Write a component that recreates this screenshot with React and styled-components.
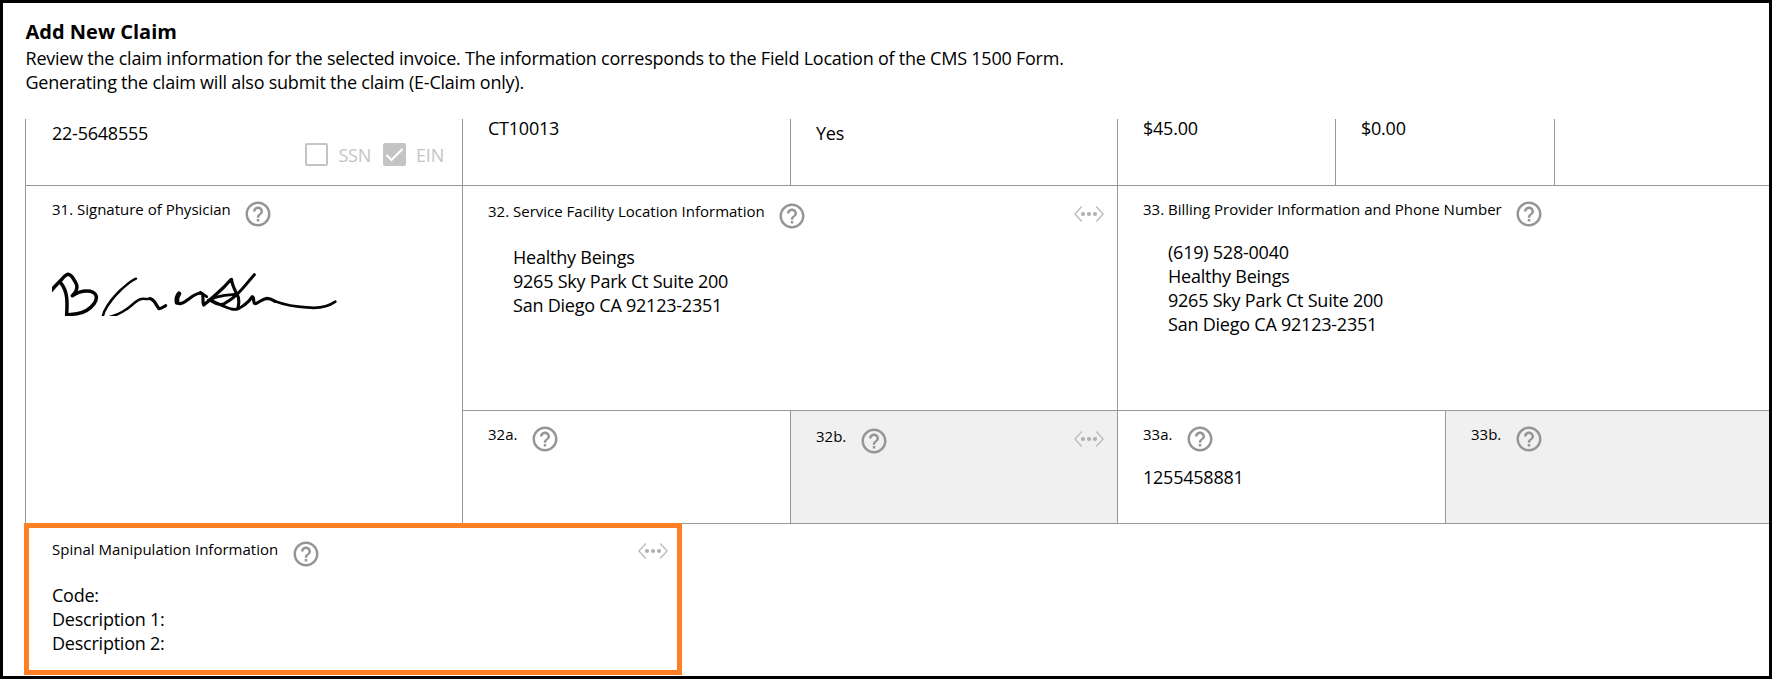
import React from "react";
import styled, { createGlobalStyle } from "styled-components";

const LINE = "#979797";

const GlobalStyle = createGlobalStyle`
  * { box-sizing: border-box; }
  body {
    margin: 0;
    background: #fff;
    color: #000;
    font-family: "Open Sans", "Noto Sans", sans-serif;
    font-size: 18px;
    line-height: 24px;
    letter-spacing: -0.23px;
  }
`;

const Frame = styled.main`
  width: 1772px;
  height: 679px;
  border: 3px solid #000;
  overflow: hidden;
  background: #fff;
`;

const Header = styled.header`
  height: 116px;
  padding: 16px 0 0 22.5px;
`;

const Title = styled.h1`
  margin: 0;
  font-size: 20px;
  line-height: 25px;
  font-weight: 700;
  letter-spacing: 0;
`;

const Intro = styled.p`
  margin: 2px 0 0;
  white-space: pre;
`;

const Form = styled.section`
  margin-left: 22px;
  display: flex;
  flex-direction: column;
`;

const Row = styled.div`
  display: grid;
  grid-template-columns: ${(p) => p.$cols};
  height: ${(p) => p.$h}px;
`;

const Cell = styled.div`
  border-left: 1px solid ${LINE};
  border-bottom: 1px solid ${LINE};
  background: ${(p) => (p.$muted ? "#f0f0f0" : "transparent")};
  padding: ${(p) => p.$top ?? 0}px 13px 0 ${(p) => p.$left ?? 25}px;
  min-width: 0;
`;

const Stack = styled.div`
  display: grid;
  grid-template-rows: 225px 113px;
`;

const Split = styled.div`
  display: grid;
  grid-template-columns: ${(p) => p.$cols};
`;

const Heading = styled.div`
  display: flex;
  align-items: flex-start;
  height: 29px;
`;

const Label = styled.span`
  margin-top: -1px;
  font-size: 15px;
  line-height: 20px;
  letter-spacing: 0;
  white-space: nowrap;
`;

const HelpSvg = styled.svg`
  flex: none;
  width: 30px;
  height: 30px;
  margin: -1px 0 0 12.4px;
`;

const MoreSvg = styled.svg`
  flex: none;
  width: 30px;
  height: 16px;
  margin: ${(p) => p.$top ?? 4}px 0 0 auto;
`;

const Lines = styled.div`
  margin: ${(p) => p.$gap ?? 0}px 0 0 ${(p) => p.$indent ?? 0}px;
  white-space: nowrap;
`;

const Checks = styled.div`
  display: flex;
  align-items: center;
  justify-content: flex-end;
  height: 23px;
  margin-top: -2px;
  padding-right: 5px;
  color: #c4c4c4;
`;

const CheckBox = styled.span`
  width: 23px;
  height: 23px;
  border: 2px solid #c4c4c4;
  border-radius: 2px;
  background: ${(p) => (p.$on ? "#c4c4c4" : "#fff")};
  display: flex;
  align-items: center;
  justify-content: center;
`;

const CheckText = styled.span`
  margin: 0 12px 0 10px;
  &:last-child { margin-right: 0; }
`;

const SignatureSvg = styled.svg`
  display: block;
  width: 286px;
  height: 44px;
  margin-top: 43px;
`;

const Highlight = styled.div`
  width: 658px;
  height: 152px;
  margin: -1px 0 0 -1px;
  border: 5px solid #ff7f27;
  padding: 12px 9px 0 23px;
`;

function Help() {
  return (
    <HelpSvg viewBox="0 0 24 24" fill="#959595">
      <path d="M11 18h2v-2h-2v2zm1-16C6.48 2 2 6.48 2 12s4.48 10 10 10 10-4.48 10-10S17.52 2 12 2zm0 18c-4.41 0-8-3.59-8-8s3.59-8 8-8 8 3.59 8 8-3.59 8-8 8zm0-14c-2.21 0-4 1.79-4 4h2c0-1.1.9-2 2-2s2 .9 2 2c0 2-3 1.75-3 5h2c0-2.25 3-2.5 3-5 0-2.21-1.79-4-4-4z" />
    </HelpSvg>
  );
}

function More({ top }) {
  return (
    <MoreSvg viewBox="0 0 30 16" $top={top}>
      <path d="M7.8 .6 .9 8l6.9 7.4M22.2 .6 29.1 8l-6.9 7.4" fill="none" stroke="#bcbcbc" strokeWidth="1.4" />
      <circle cx="9" cy="8" r="2.1" fill="#b0b0b0" />
      <circle cx="15" cy="8" r="2.1" fill="#b0b0b0" />
      <circle cx="21" cy="8" r="2.1" fill="#b0b0b0" />
    </MoreSvg>
  );
}

function FieldHeading({ children, more, moreTop }) {
  return (
    <Heading>
      <Label>{children}</Label>
      <Help />
      {more && <More top={moreTop} />}
    </Heading>
  );
}

function Signature() {
  return (
    <SignatureSvg viewBox="66 66 858 132">
      <g fill="none" stroke="#050505" strokeLinecap="round" strokeLinejoin="round">
        <path strokeWidth="10.5" d="M62 124C75 108 86 97 97 86C105 77 110 73 115 73C125 74 131 87 137 98C145 111 140 124 127 137C144 126 162 120 182 124C203 130 202 146 193 160C181 176 163 188 141 191L110 195" />
        <path strokeWidth="10.5" d="M91 97C103 111 108 126 110 143C112 162 111 177 110 193" />
        <path strokeWidth="7.5" d="M318 86C302 92 288 106 272 120C249 142 232 166 223 184L218 200" />
        <path strokeWidth="7.5" d="M235 202C257 197 271 191 289 178C309 165 318 150 334 147C345 145 352 149 360 146" />
        <path strokeWidth="9.5" d="M360 146C374 149 377 164 387 176C394 177 401 170 407 167" />
        <path strokeWidth="14" d="M447 131C440 139 440 150 441 157" />
        <path strokeWidth="9.5" d="M441 158C450 166 463 157 472 150C487 139 500 128 514 130C524 134 515 151 521 165C539 151 562 130 582 111C596 98 606 81 605 91C607 108 617 124 625 142C629 158 625 170 624 174" />
        <path strokeWidth="8.5" d="M511 127L530 140M535 151C548 144 561 140 584 136L614 133M544 151C563 161 581 171 604 177C621 181 631 174 644 164" />
        <path strokeWidth="9" d="M673 74C656 93 643 112 624 130C608 146 598 153 583 161C571 166 557 162 545 154" />
        <path strokeWidth="9.5" d="M644 164C652 158 660 151 667 140C675 142 667 160 676 161C688 157 698 146 711 145C722 145 727 149 735 154" />
        <path strokeWidth="8" d="M735 154C767 166 796 171 830 172C862 176 893 171 916 155" />
      </g>
    </SignatureSvg>
  );
}

export default function App() {
  return (
    <>
      <GlobalStyle />
      <Frame>
        <Header>
          <Title>Add New Claim</Title>
          <Intro>
            {"Review the claim information for the selected invoice. The information corresponds to the Field Location of the CMS 1500 Form.\nGenerating the claim will also submit the claim (E-Claim only)."}
          </Intro>
        </Header>
        <Form>
          <Row $cols="437px 328px 327px 218px 219px 1fr" $h={67}>
            <Cell $top={2} $left={26}>
              22-5648555
              <Checks>
                <CheckBox />
                <CheckText>SSN</CheckText>
                <CheckBox $on>
                  <svg width="19" height="19" viewBox="0 0 19 19">
                    <path d="M1.5 10 6.5 15 17.5 4" fill="none" stroke="#fff" strokeWidth="2.2" />
                  </svg>
                </CheckBox>
                <CheckText>EIN</CheckText>
              </Checks>
            </Cell>
            <Cell><Lines $gap={-3}>CT10013</Lines></Cell>
            <Cell $top={2}>Yes</Cell>
            <Cell><Lines $gap={-3}>$45.00</Lines></Cell>
            <Cell><Lines $gap={-3}>$0.00</Lines></Cell>
            <Cell />
          </Row>
          <Row $cols="437px 655px 1fr" $h={338}>
            <Cell $top={14} $left={26}>
              <FieldHeading>31. Signature of Physician</FieldHeading>
              <Signature />
            </Cell>
            <Stack>
              <Cell $top={16}>
                <FieldHeading more>32. Service Facility Location Information</FieldHeading>
                <Lines $gap={14} $indent={25}>
                  Healthy Beings<br />9265 Sky Park Ct Suite 200<br />San Diego CA 92123-2351
                </Lines>
              </Cell>
              <Split $cols="328px 1fr">
                <Cell $top={14}><FieldHeading>32a.</FieldHeading></Cell>
                <Cell $top={16} $muted><FieldHeading more>32b.</FieldHeading></Cell>
              </Split>
            </Stack>
            <Stack>
              <Cell $top={14}>
                <FieldHeading>33. Billing Provider Information and Phone Number</FieldHeading>
                <Lines $gap={11} $indent={25}>
                  (619) 528-0040<br />Healthy Beings<br />9265 Sky Park Ct Suite 200<br />San Diego CA 92123-2351
                </Lines>
              </Cell>
              <Split $cols="328px 1fr">
                <Cell $top={14}>
                  <FieldHeading>33a.</FieldHeading>
                  <Lines $gap={11}>1255458881</Lines>
                </Cell>
                <Cell $top={14} $muted><FieldHeading>33b.</FieldHeading></Cell>
              </Split>
            </Stack>
          </Row>
          <Highlight>
            <FieldHeading more moreTop={3}>Spinal Manipulation Information</FieldHeading>
            <Lines $gap={14}>
              Code:<br />Description 1:<br />Description 2:
            </Lines>
          </Highlight>
        </Form>
      </Frame>
    </>
  );
}
